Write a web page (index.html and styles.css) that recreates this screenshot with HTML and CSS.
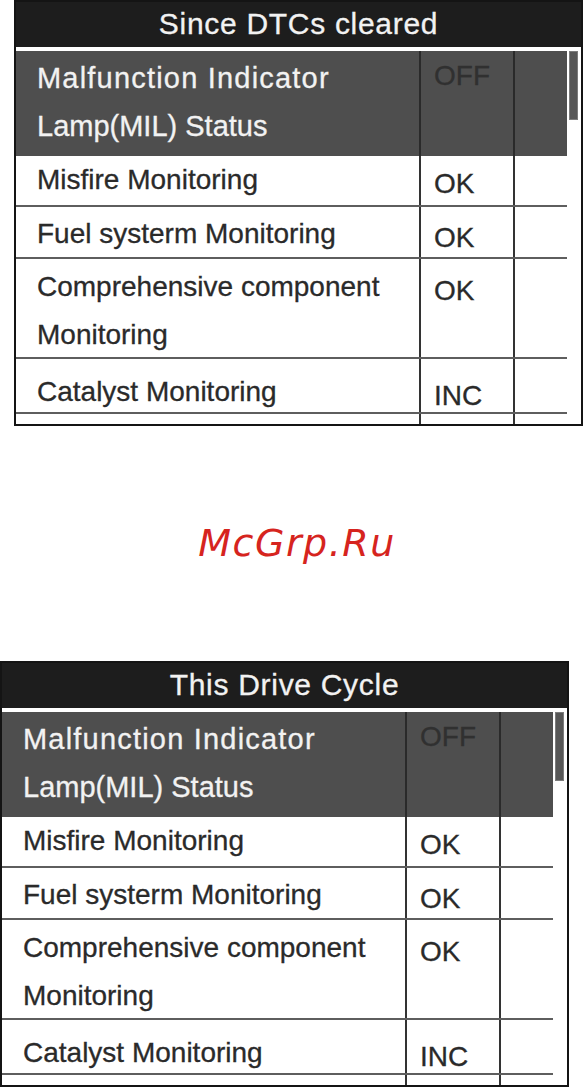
FILE: index.html
```html
<!DOCTYPE html>
<html lang="en">
<head>
<meta charset="utf-8">
<title>Readiness Test</title>
<link rel="stylesheet" href="styles.css">
</head>
<body>
  <section class="panel panel-top">
    <div class="header">Since DTCs cleared</div>
    <div class="body">
      <div class="table">
        <div class="row row-sel">
          <div class="cell label"><span class="line wide">Malfunction Indicator</span><span class="line">Lamp(MIL) Status</span></div>
          <div class="cell value">OFF</div>
          <div class="cell last"></div>
        </div>
        <div class="row row-a">
          <div class="cell label">Misfire Monitoring</div>
          <div class="cell value">OK</div>
          <div class="cell last"></div>
        </div>
        <div class="row row-b">
          <div class="cell label">Fuel systerm Monitoring</div>
          <div class="cell value">OK</div>
          <div class="cell last"></div>
        </div>
        <div class="row row-c">
          <div class="cell label">Comprehensive component Monitoring</div>
          <div class="cell value">OK</div>
          <div class="cell last"></div>
        </div>
        <div class="row row-d">
          <div class="cell label">Catalyst Monitoring</div>
          <div class="cell value">INC</div>
          <div class="cell last"></div>
        </div>
        <div class="row row-end">
          <div class="cell"></div>
          <div class="cell"></div>
          <div class="cell last"></div>
        </div>
      </div>
      <div class="scroll"><div class="thumb"></div></div>
    </div>
  </section>

  <div class="mark">McGrp.Ru</div>

  <section class="panel panel-bottom">
    <div class="header">This Drive Cycle</div>
    <div class="body">
      <div class="table">
        <div class="row row-sel">
          <div class="cell label"><span class="line wide">Malfunction Indicator</span><span class="line">Lamp(MIL) Status</span></div>
          <div class="cell value">OFF</div>
          <div class="cell last"></div>
        </div>
        <div class="row row-a">
          <div class="cell label">Misfire Monitoring</div>
          <div class="cell value">OK</div>
          <div class="cell last"></div>
        </div>
        <div class="row row-b">
          <div class="cell label">Fuel systerm Monitoring</div>
          <div class="cell value">OK</div>
          <div class="cell last"></div>
        </div>
        <div class="row row-c">
          <div class="cell label">Comprehensive component Monitoring</div>
          <div class="cell value">OK</div>
          <div class="cell last"></div>
        </div>
        <div class="row row-d">
          <div class="cell label">Catalyst Monitoring</div>
          <div class="cell value">INC</div>
          <div class="cell last"></div>
        </div>
        <div class="row row-end">
          <div class="cell"></div>
          <div class="cell"></div>
          <div class="cell last"></div>
        </div>
      </div>
      <div class="scroll"><div class="thumb"></div></div>
    </div>
  </section>
</body>
</html>
```

FILE: styles.css
```css
* {
  box-sizing: border-box;
}

html,
body {
  margin: 0;
  padding: 0;
  background: #ffffff;
}

body {
  width: 583px;
  height: 1087px;
  overflow: hidden;
  font-family: "Liberation Sans", Arial, sans-serif;
}

.panel {
  width: 569px;
  border: 2px solid #141414;
  background: #ffffff;
  -webkit-text-stroke: 0.3px currentColor;
}

.panel-top {
  margin-left: 14px;
}

.header {
  height: 45px;
  background: #1d1d1d;
  color: #f2f2f2;
  font-size: 30px;
  line-height: 43px;
  text-align: center;
  letter-spacing: 0.7px;
}

.body {
  display: flex;
  padding-top: 4px;
}

.table {
  width: 551px;
}

.row {
  --pt: 3px;
  display: grid;
  grid-template-columns: 405px 94px 52px;
  grid-template-rows: minmax(0, 1fr);
  border-bottom: 2px solid #5e5e5e;
  font-size: 28px;
  line-height: 48px;
  color: #2a2a2a;
}

.cell {
  border-right: 2px solid #333333;
}

.cell.last {
  border-right: none;
}

.label {
  padding-left: 21px;
  padding-top: var(--pt);
}

.line {
  display: block;
  white-space: nowrap;
}

.wide {
  letter-spacing: 1.2px;
}

.value {
  padding-left: 13px;
  padding-top: calc(var(--pt) + 4px);
}

.row-sel {
  height: 105px;
  background: #4e4e4e;
  color: #f2f2f2;
  border-bottom: none;
}

.row-sel .label {
  font-size: 29px;
}

.row-sel .cell {
  border-right-color: #2a2a2a;
}

.row-sel .cell.last {
  border-right: none;
}

.row-sel .value {
  color: #303030;
  padding-top: 1px;
}

.row-a {
  height: 51px;
  --pt: 0px;
}

.row-b {
  height: 52px;
  --pt: 3px;
}

.row-c {
  height: 100px;
  --pt: 4px;
}

.row-d {
  height: 55px;
  --pt: 9px;
}

.row-end {
  height: 10px;
  border-bottom: none;
}

.scroll {
  width: 14px;
  padding-left: 2px;
}

.thumb {
  width: 9px;
  height: 69px;
  background: #575757;
  border: 1px solid #7c7c7c;
}

.mark {
  height: 235px;
  padding-top: 95px;
  padding-left: 11px;
  text-align: center;
  font-family: "DejaVu Sans", Verdana, sans-serif;
  font-style: italic;
  font-size: 38px;
  line-height: 44px;
  letter-spacing: 1.5px;
  color: #d6241e;
}
```
